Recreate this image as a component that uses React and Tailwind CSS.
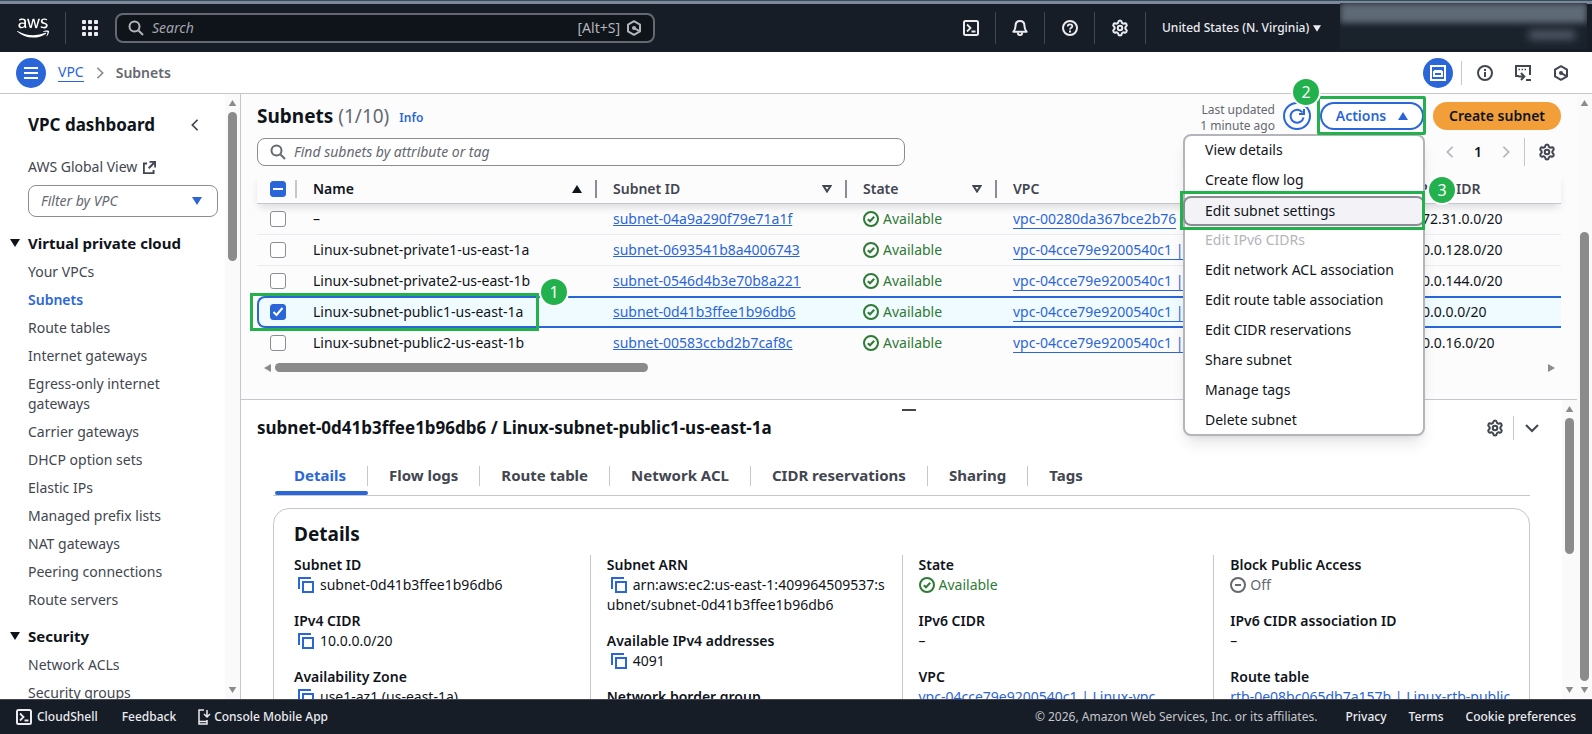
import { Settings } from 'lucide-react';
import { FaAws } from 'react-icons/fa';

const VPC_LINKS = [
  'Your VPCs', 'Subnets', 'Route tables', 'Internet gateways', 'Egress-only internet gateways',
  'Carrier gateways', 'DHCP option sets', 'Elastic IPs', 'Managed prefix lists', 'NAT gateways',
  'Peering connections', 'Route servers',
];

const SECURITY_LINKS = ['Network ACLs', 'Security groups'];

const SUBNETS = [
  { name: '–', id: 'subnet-04a9a290f79e71a1f', vpc: 'vpc-00280da367bce2b76', cidr: '172.31.0.0/20' },
  { name: 'Linux-subnet-private1-us-east-1a', id: 'subnet-0693541b8a4006743', vpc: 'vpc-04cce79e9200540c1 | Linux-vpc', cidr: '10.0.128.0/20' },
  { name: 'Linux-subnet-private2-us-east-1b', id: 'subnet-0546d4b3e70b8a221', vpc: 'vpc-04cce79e9200540c1 | Linux-vpc', cidr: '10.0.144.0/20' },
  { name: 'Linux-subnet-public1-us-east-1a', id: 'subnet-0d41b3ffee1b96db6', vpc: 'vpc-04cce79e9200540c1 | Linux-vpc', cidr: '10.0.0.0/20', selected: true },
  { name: 'Linux-subnet-public2-us-east-1b', id: 'subnet-00583ccbd2b7caf8c', vpc: 'vpc-04cce79e9200540c1 | Linux-vpc', cidr: '10.0.16.0/20' },
];

const ACTIONS = [
  { label: 'View details' },
  { label: 'Create flow log' },
  { label: 'Edit subnet settings', active: true },
  { label: 'Edit IPv6 CIDRs', disabled: true },
  { label: 'Edit network ACL association' },
  { label: 'Edit route table association' },
  { label: 'Edit CIDR reservations' },
  { label: 'Share subnet' },
  { label: 'Manage tags' },
  { label: 'Delete subnet' },
];

const TABS = ['Details', 'Flow logs', 'Route table', 'Network ACL', 'CIDR reservations', 'Sharing', 'Tags'];

/* Icons */
function Icon({ children, className = 'w-4 h-4' }) {
  return (
    <svg viewBox="0 0 16 16" fill="none" stroke="currentColor" strokeWidth="2" className={`shrink-0 ${className}`} aria-hidden="true">
      {children}
    </svg>
  );
}

const SearchIcon = ({ className }) => (
  <Icon className={className}><circle cx="6.5" cy="6.5" r="5" /><path d="M10.5 10.5 15 15" /></Icon>
);
const ShellIcon = () => (
  <Icon><rect x="1" y="1" width="14" height="14" rx="1.5" /><path d="m4 4.500 3.500 3.500L4 11.500M8.500 11.500h4" strokeWidth="1.800" /></Icon>
);
const BellIcon = () => (
  <Icon>
    <path d="M8 1c-2.800 0-4.400 1.900-4.400 4.500 0 3-.9 4.700-2.300 6.300h13.400c-1.400-1.600-2.300-3.300-2.300-6.300C12.400 2.900 10.800 1 8 1z" strokeLinejoin="round" />
    <path d="M5.800 12.500c0 3.500 4.400 3.500 4.400 0" />
  </Icon>
);
const HelpIcon = () => (
  <Icon>
    <circle cx="8" cy="8" r="7" />
    <path d="M5.700 6.600C5.700 3.600 10.300 3.700 10.300 6.300 10.300 7.800 8 7.700 8 9.600" strokeWidth="1.800" />
    <path d="M8 10.600v1.900" />
  </Icon>
);
const InfoIcon = () => (
  <Icon><circle cx="8" cy="8" r="7" /><path d="M8 7v5M8 4v2" /></Icon>
);
const HexIcon = () => (
  <Icon>
    <path d="M8 1.200 14 4.600v6.800L8 14.800 2 11.400V4.600z" strokeLinejoin="round" />
    <circle cx="8" cy="8" r="2" fill="currentColor" stroke="none" />
    <path d="m8 8 5 2.800" />
  </Icon>
);
const CheckCircle = () => (
  <Icon><circle cx="8" cy="8" r="7" /><path d="m4.800 8.200 2.200 2.100 4.200-4.500" /></Icon>
);
const CopyIcon = () => (
  <Icon className="w-4 h-4 inline-block align-[-3px] ml-1 mr-[6px] text-[#2b66d9]">
    <rect x="5" y="5" width="10" height="10" /><path d="M1 12V1h12" />
  </Icon>
);
const GearIcon = ({ className = 'w-[18px] h-[18px]' }) => <Settings className={`shrink-0 ${className}`} strokeWidth={2.7} />;
const Chevron = ({ d, className }) => <Icon className={className}><path d={d} /></Icon>;
const LEFT = 'M11 2 5 8l6 6';
const RIGHT = 'm5 2 6 6-6 6';

function Triangle({ dir = 'down', className = 'w-[10px] h-2' }) {
  const points = { down: '0,0 10,0 5,8', up: '0,8 10,8 5,0', left: '8,0 8,8 1,4', right: '1,0 1,8 8,4' };
  return (
    <svg viewBox={dir === 'down' || dir === 'up' ? '0 0 10 8' : '0 0 8 8'} fill="currentColor" className={`shrink-0 ${className}`} aria-hidden="true">
      <polygon points={points[dir]} />
    </svg>
  );
}

function StepBadge({ n, className }) {
  return (
    <span className={`absolute z-30 w-[26px] h-[26px] rounded-full bg-[#22b14c] ring-2 ring-white text-white text-base leading-[26px] font-normal text-center ${className}`}>
      {n}
    </span>
  );
}

function ScrollBar({ before, thumb }) {
  return (
    <div className="w-[15px] shrink-0 bg-[#fafafa] flex flex-col items-center py-[6px] text-[#8b8b8b]">
      <Triangle dir="up" className="w-[9px] h-[6px]" />
      <div className={before} />
      <div className={`w-[9px] rounded-full bg-[#8b8b8b] ${thumb}`} />
      <Triangle className="w-[9px] h-[6px] mt-auto" />
    </div>
  );
}

function TopNav() {
  return (
    <header className="h-12 shrink-0 bg-[#161d26] text-[#ebebf0] flex items-center">
      <a href="#home" aria-label="AWS" className="w-[65px] flex justify-center text-white"><FaAws className="w-8 h-8" /></a>
      <div className="w-px h-8 bg-[#424650]" />
      <button aria-label="Services" className="ml-4 mr-[17px]">
        <svg viewBox="0 0 16 16" fill="currentColor" className="w-4 h-4">
          {[0, 6, 12].map(y => [0, 6, 12].map(x => <rect key={`${x}-${y}`} x={x} y={y} width="4" height="4" rx="1" />))}
        </svg>
      </button>
      <label className="w-[540px] h-[30px] border-2 border-[#656871] rounded-lg bg-[#0f141a] flex items-center gap-2 px-[11px] text-[#b4b4bb]">
        <SearchIcon className="w-4 h-4" />
        <input aria-label="Search" placeholder="Search" className="flex-1 min-w-0 bg-transparent outline-none text-sm placeholder:italic placeholder:text-[#a4a4ad]" />
        <span className="text-sm flex items-center gap-[6px]">[Alt+S] <HexIcon /></span>
      </label>
      <div className="ml-auto flex items-center h-8">
        <button aria-label="CloudShell" className="px-4 h-8"><ShellIcon /></button>
        <button aria-label="Notifications" className="px-4 h-8 border-l border-[#424650]"><BellIcon /></button>
        <button aria-label="Support" className="pl-[17px] pr-4 h-8 border-l border-[#424650]"><HelpIcon /></button>
        <button aria-label="Settings" className="px-4 h-8 border-l border-[#424650]"><GearIcon /></button>
        <button className="w-[174px] px-4 h-8 border-l border-[#424650] text-xs font-medium flex items-center gap-1 whitespace-nowrap">
          United States (N. Virginia) <Triangle className="w-2 h-[7px]" />
        </button>
      </div>
      <div className="ml-[21px] mr-[5px] w-[247px] h-[46px] -mt-1 bg-[#1a222c] overflow-hidden flex flex-col items-end">
        <div className="w-full h-5 bg-[#5f6a77] blur-[3px]" />
        <div className="w-[46px] h-2 mt-2 mr-3 bg-[#596270] blur-[4px]" />
      </div>
    </header>
  );
}

function BreadcrumbBar() {
  return (
    <div className="h-[42px] shrink-0 bg-white border-b border-[#c6c6cd] flex items-center pl-4 pr-[23px] text-sm">
      <button aria-label="Open navigation" className="w-[30px] h-[30px] rounded-full bg-[#2b66d9] text-white flex items-center justify-center">
        <Icon><path d="M1 3h14M1 8h14M1 13h14" /></Icon>
      </button>
      <nav className="flex items-center ml-3">
        <a href="#vpc" className="text-[#2b66d9] border-b border-[#2b66d9] leading-[18px]">VPC</a>
        <Chevron d={RIGHT} className="w-4 h-[14px] mx-2 text-[#8c8c94]" />
        <span className="font-semibold text-[#656871]">Subnets</span>
      </nav>
      <div className="ml-auto flex items-center text-[#424650]">
        <button aria-label="Split panel" className="w-[30px] h-[30px] rounded-full bg-[#2b66d9] text-white flex items-center justify-center">
          <Icon><rect x="1" y="1" width="14" height="14" /><path d="M4 7h8v4H4zM4 6h8" /></Icon>
        </button>
        <div className="w-px h-6 bg-[#c6c6cd] mx-2" />
        <button aria-label="Info" className="ml-[7px] mr-2"><InfoIcon /></button>
        <button aria-label="CloudShell drawer" className="ml-[14px]">
          <Icon><path d="M4 11H1V1h14v9M11 15h5" /><path d="M3.500 4.500h1.500M6.500 4.500H8M9.500 4.500H11" strokeWidth="1.500" /><path d="M3.500 11.500H9M6 8l3.300 3.500L6 15" /></Icon>
        </button>
        <button aria-label="Assistant" className="ml-[22px]"><HexIcon /></button>
      </div>
    </div>
  );
}

function NavSection({ title, links }) {
  return (
    <section className="mt-[14px]">
      <h3 className="flex items-center text-[15px] leading-6 font-bold text-[#0f141a]">
        <Triangle className="w-[10px] h-2 ml-[10px] mr-2" />
        {title}
      </h3>
      <ul className="mt-[7px] pl-7 pr-10 flex flex-col gap-2">
        {links.map(l => (
          <li key={l} className="leading-5">
            <a href="#nav" className={l === 'Subnets' ? 'font-semibold text-[#2b66d9]' : 'text-[#424650]'}>{l}</a>
          </li>
        ))}
      </ul>
    </section>
  );
}

function SideNav() {
  return (
    <aside className="w-[241px] shrink-0 border-r border-[#c6c6cd] bg-white flex text-sm">
      <div className="flex-1 min-w-0 overflow-hidden">
        <div className="flex items-center justify-between pl-7 pr-[22px] pt-[18px]">
          <h2 className="text-[17px] leading-[26px] font-bold text-[#0f141a]">VPC dashboard</h2>
          <button aria-label="Close navigation"><Chevron d={LEFT} className="w-4 h-[14px] text-[#424650]" /></button>
        </div>
        <a href="#global" className="flex items-center gap-[6px] pl-7 mt-[19px] leading-5 text-[#424650]">
          AWS Global View
          <Icon className="w-[13px] h-[13px]"><path d="M5 3H1v12h12v-4M8 1h7v7M15 1 7 9" strokeWidth="2.400" /></Icon>
        </a>
        <div className="relative ml-7 mr-[7px] mt-2">
          <select aria-label="Filter by VPC" className="appearance-none w-full h-8 border border-[#8c8c94] rounded-lg px-3 italic text-[#656871] bg-white">
            <option>Filter by VPC</option>
          </select>
          <Triangle className="absolute right-4 top-3 w-[10px] h-2 text-[#2b66d9]" />
        </div>
        <NavSection title="Virtual private cloud" links={VPC_LINKS} />
        <NavSection title="Security" links={SECURITY_LINKS} />
      </div>
      <ScrollBar before="h-[6px]" thumb="h-[149px]" />
    </aside>
  );
}

function ActionsMenu() {
  return (
    <div className="relative z-20">
      <button className="w-[104px] h-7 rounded-full border-2 border-[#2b66d9] bg-white text-[#2b66d9] font-semibold flex items-center justify-center gap-3">
        Actions <Triangle dir="up" />
      </button>
      <div className="absolute -left-[3px] -right-[2px] -top-[6px] h-[39px] border-[3px] border-[#22b14c] rounded-xs z-20 pointer-events-none" />
      <StepBadge n="2" className="-left-[27px] -top-[23px]" />
      <ul className="absolute right-[-1px] top-8 w-[242px] h-[302px] bg-white border-2 border-[#b4b4bb] rounded-lg shadow-lg">
        {ACTIONS.map(a => (
          <li key={a.label} className="h-[30px] relative">
            <button
              disabled={a.disabled}
              className={
                a.active
                  ? 'absolute -inset-x-[2px] inset-y-0 px-5 text-left text-[#0f141a] bg-[#f3f3f7] border-2 border-[#8c8c94] rounded-lg leading-6'
                  : 'w-full h-[30px] px-5 pb-[2px] text-left text-[#0f141a] disabled:text-[#b4b4bb]'
              }
            >
              {a.label}
            </button>
            {a.active && (
              <>
                <div className="absolute -left-[5px] -right-[2px] -top-[5px] -bottom-1 border-[3px] border-[#22b14c] pointer-events-none" />
                <StepBadge n="3" className="-right-8 -top-[19px]" />
              </>
            )}
          </li>
        ))}
      </ul>
    </div>
  );
}

function Check({ label, checked, mixed }) {
  return (
    <span className="relative block w-4 h-4">
      <input
        type="checkbox"
        aria-label={label}
        defaultChecked={checked || mixed}
        className="block appearance-none w-4 h-4 rounded-[3px] border border-[#8c8c94] bg-white checked:bg-[#2b66d9] checked:border-[#2b66d9]"
      />
      {(checked || mixed) && (
        <Icon className="absolute inset-0 w-4 h-4 text-white pointer-events-none">
          <path d={mixed ? 'M3 8h10' : 'm3.500 8 3 3 6-7'} />
        </Icon>
      )}
    </span>
  );
}

function HeadCell({ label, className = '', sorted, filter, sep = 'bg-[#8c8c94]' }) {
  return (
    <th className={`p-0 text-left font-semibold ${className}`}>
      <div className="flex items-center h-[29px] pl-4">
        {label}
        {sorted && <Triangle dir="up" className="w-[10px] h-2 ml-auto mr-[13px]" />}
        {filter && (
          <svg viewBox="0 0 10 8" fill="none" stroke="currentColor" strokeWidth="2" className="w-[10px] h-2 ml-auto mr-[13px]"><path d="M1.500 1h7L5 6.500z" /></svg>
        )}
        {sep && <div className={`w-[2px] h-[18px] ${sep} ${sorted || filter ? '' : 'ml-auto'}`} />}
      </div>
    </th>
  );
}

function rowClass(s, i) {
  if (s.selected) return 'h-8 [&>td]:bg-[#f0fbff] [&>td]:border-y-2 [&>td]:border-[#2b66d9] [&>td:first-child]:border-l-2 [&>td:first-child]:rounded-l-lg';
  return i < 2 ? 'h-[31px] [&>td]:border-b [&>td]:border-[#ebebf0]' : 'h-[30px]';
}

function SubnetTable() {
  return (
    <table className="w-full table-fixed border-separate border-spacing-0 mt-2 text-[#0f141a]">
      <thead className="text-[#424650]">
        <tr className="relative [&>th]:border-b [&>th]:border-[#c6c6cd] shadow-[0_5px_8px_-2px_rgba(0,7,22,0.14)]">
          <th className="w-10 p-0">
            <div className="flex items-center justify-between pl-[13px]">
              <Check label="Select all subnets" mixed />
              <div className="w-[2px] h-[18px] bg-[#c6c6cd]" />
            </div>
          </th>
          <HeadCell label="Name" sorted className="w-[300px] text-[#0f141a]" />
          <HeadCell label="Subnet ID" filter className="w-[250px]" />
          <HeadCell label="State" filter className="w-[150px]" />
          <HeadCell label="VPC" className="w-[401px]" />
          <HeadCell label="IPv4 CIDR" sep="" />
        </tr>
      </thead>
      <tbody>
        {SUBNETS.map((s, i) => (
          <tr key={s.id} className={rowClass(s, i)}>
            <td className={`relative p-0 ${s.selected ? 'pl-[11px]' : 'pl-[13px]'}`}>
              <Check label={`Select ${s.name}`} checked={s.selected} />
              {s.selected && (
                <>
                  <div className="absolute -left-[9px] -top-[5px] w-[289px] h-[38px] border-[3px] border-[#22b14c] z-10 pointer-events-none" />
                  <StepBadge n="1" className="left-[282px] -top-[19px]" />
                </>
              )}
            </td>
            <td className="p-0 pl-4 whitespace-nowrap">{s.name}</td>
            <td className="p-0 pl-4"><a href="#subnet" className="text-[#2b66d9] underline underline-offset-1">{s.id}</a></td>
            <td className="p-0 pl-4">
              <span className="flex items-center gap-1 text-[#2f7a35]"><CheckCircle />Available</span>
            </td>
            <td className="p-0 pl-4 whitespace-nowrap">
              <a href="#vpc" className="inline-block leading-[18px] text-[#2b66d9] border-b border-[#2b66d9]">{s.vpc}</a>
            </td>
            <td className="p-0 pl-4">{s.cidr}</td>
          </tr>
        ))}
      </tbody>
    </table>
  );
}

function SubnetList() {
  return (
    <section className="flex-1 min-h-0 bg-[#fcfcfd] px-4 pt-2">
      <div className="flex items-center h-7">
        <h1 className="text-[19px] leading-6 font-bold text-[#0f141a]">Subnets <span className="font-normal text-[#656871]">(1/10)</span></h1>
        <a href="#info" className="ml-[10px] mt-1 text-xs font-semibold text-[#2b66d9]">Info</a>
        <p className="ml-auto mt-1 mr-2 text-xs leading-4 text-[#656871] text-right">Last updated<br />1 minute ago</p>
        <button aria-label="Refresh" className="w-7 h-7 rounded-full border-2 border-[#2b66d9] text-[#2b66d9] flex items-center justify-center mr-[9px]">
          <Icon><path d="M14.500 9.500A6.500 6.500 0 1 1 13.500 4.500M15 1v5h-5" /></Icon>
        </button>
        <ActionsMenu />
        <button className="ml-[9px] w-32 h-7 rounded-full bg-[#f29f3a] font-semibold text-[#0f141a]">Create subnet</button>
      </div>
      <div className="flex items-center h-7 mt-2">
        <label className="w-[648px] h-7 border border-[#8c8c94] rounded-lg bg-white flex items-center gap-2 px-3 text-[#656871]">
          <SearchIcon className="w-4 h-4" />
          <input aria-label="Find subnets" placeholder="Find subnets by attribute or tag" className="flex-1 min-w-0 bg-transparent outline-none placeholder:italic placeholder:text-[#656871]" />
        </label>
        <div className="ml-auto flex items-center text-[#b4b4bb]">
          <button aria-label="Previous page"><Chevron d={LEFT} className="w-4 h-[14px]" /></button>
          <button className="w-8 mx-1 font-semibold text-[#0f141a]">1</button>
          <button aria-label="Next page"><Chevron d={RIGHT} className="w-4 h-[14px]" /></button>
          <div className="w-px h-7 bg-[#c6c6cd] ml-[10px] mr-[13px]" />
          <button aria-label="Preferences" className="mr-[5px] text-[#424650]"><GearIcon /></button>
        </div>
      </div>
      <SubnetTable />
      <div className="flex items-center h-[15px] mt-[2px] px-[6px] text-[#8b8b8b]">
        <Triangle dir="left" className="w-2 h-2" />
        <div className="w-[373px] h-[9px] ml-1 rounded-full bg-[#8b8b8b]" />
        <Triangle dir="right" className="w-2 h-2 ml-auto" />
      </div>
    </section>
  );
}

function Field({ label, children }) {
  return (
    <div className="mb-4 leading-5">
      <dt className="font-semibold">{label}</dt>
      <dd className="break-all">{children}</dd>
    </div>
  );
}

function SplitPanel() {
  return (
    <section className="h-[300px] shrink-0 bg-white border-t border-[#c6c6cd] flex text-[#0f141a]">
      <div className="flex-1 min-w-0 overflow-hidden pt-[9px]">
        <div className="pl-[15px]"><div className="w-[14px] h-[2px] bg-[#424650] mx-auto" /></div>
        <div className="h-[34px] flex items-center pl-4 pr-[22px] text-[#424650]">
          <h2 className="text-[17px] font-bold text-[#0f141a] mr-auto">subnet-0d41b3ffee1b96db6 / Linux-subnet-public1-us-east-1a</h2>
          <button aria-label="Panel preferences"><GearIcon /></button>
          <div className="w-px h-6 bg-[#c6c6cd] ml-[9px] mr-[10px]" />
          <button aria-label="Close panel"><Chevron d="m2 5 6 6 6-6" /></button>
        </div>
        <div role="tablist" className="flex mx-8 mt-3 h-[39px] border-b border-[#c6c6cd] text-[15px] font-bold text-[#424650]">
          {TABS.map((t, i) => (
            <button key={t} role="tab" aria-selected={i === 0} className={`relative flex items-center h-[38px] ${i === 0 ? 'text-[#2b66d9]' : ''}`}>
              <span className="px-[21px]">{t}</span>
              {i < TABS.length - 1 && <span className="w-px h-5 bg-[#c6c6cd]" />}
              {i === 0 && <span className="absolute left-[2px] right-0 bottom-0 h-1 rounded-full bg-[#2b66d9]" />}
            </button>
          ))}
        </div>
        <div className="mx-8 mt-3 border border-[#c6c6cd] rounded-2xl px-5 pt-[13px]">
          <h3 className="text-[19px] leading-6 font-bold">Details</h3>
          <dl className="grid grid-cols-4 -mx-4 mt-[9px] [&>div]:px-4 [&>div+div]:border-l [&>div+div]:border-[#c6c6cd]">
            <div>
              <Field label="Subnet ID"><CopyIcon />subnet-0d41b3ffee1b96db6</Field>
              <Field label="IPv4 CIDR"><CopyIcon />10.0.0.0/20</Field>
              <Field label="Availability Zone"><CopyIcon />use1-az1 (us-east-1a)</Field>
            </div>
            <div>
              <Field label="Subnet ARN"><CopyIcon />arn:aws:ec2:us-east-1:409964509537:subnet/subnet-0d41b3ffee1b96db6</Field>
              <Field label="Available IPv4 addresses"><CopyIcon />4091</Field>
              <Field label="Network border group"><CopyIcon />us-east-1</Field>
            </div>
            <div>
              <Field label="State"><span className="flex items-center gap-1 text-[#2f7a35]"><CheckCircle />Available</span></Field>
              <Field label="IPv6 CIDR">–</Field>
              <Field label="VPC"><a href="#vpc" className="text-[#2b66d9] whitespace-nowrap">vpc-04cce79e9200540c1 | Linux-vpc</a></Field>
            </div>
            <div>
              <Field label="Block Public Access">
                <span className="flex items-center gap-1 text-[#656871]"><Icon><circle cx="8" cy="8" r="7" /><path d="M5 8h6" /></Icon>Off</span>
              </Field>
              <Field label="IPv6 CIDR association ID">–</Field>
              <Field label="Route table"><a href="#rtb" className="text-[#2b66d9] whitespace-nowrap">rtb-0e08bc065db7a157b | Linux-rtb-public</a></Field>
            </div>
          </dl>
        </div>
      </div>
      <ScrollBar before="h-[6px]" thumb="h-[136px]" />
    </section>
  );
}

function Footer() {
  return (
    <footer className="h-[35px] shrink-0 bg-[#161d26] border-t border-[#424650] flex items-center px-4 text-xs font-medium text-[#ebebf0]">
      <button className="flex items-center gap-[5px]"><ShellIcon />CloudShell</button>
      <a href="#feedback" className="ml-6">Feedback</a>
      <a href="#mobile" className="ml-5 flex items-center gap-[2px]">
        <Icon className="w-4 h-4"><path d="M8 1H3v14h8v-4M3 12.500h8" strokeWidth="1.500" /><path d="M11 1v6.500M8 5l3 3 3-3" strokeWidth="1.500" /></Icon>
        Console Mobile App
      </a>
      <span className="ml-auto font-normal text-[#c6c6cd]">© 2026, Amazon Web Services, Inc. or its affiliates.</span>
      <a href="#privacy" className="ml-7">Privacy</a>
      <a href="#terms" className="ml-[22px]">Terms</a>
      <a href="#cookies" className="ml-[22px]">Cookie preferences</a>
    </footer>
  );
}

export default function App() {
  return (
    <div className="h-screen flex flex-col overflow-hidden bg-white font-['Noto_Sans',sans-serif] text-sm">
      <div className="h-1 shrink-0 bg-[#7f879b] border-t border-[#31505a]" />
      <TopNav />
      <BreadcrumbBar />
      <div className="flex-1 min-h-0 flex">
        <SideNav />
        <main className="flex-1 min-w-0 flex flex-col">
          <SubnetList />
          <SplitPanel />
        </main>
        <ScrollBar before="h-[126px]" thumb="h-[449px]" />
      </div>
      <Footer />
    </div>
  );
}
